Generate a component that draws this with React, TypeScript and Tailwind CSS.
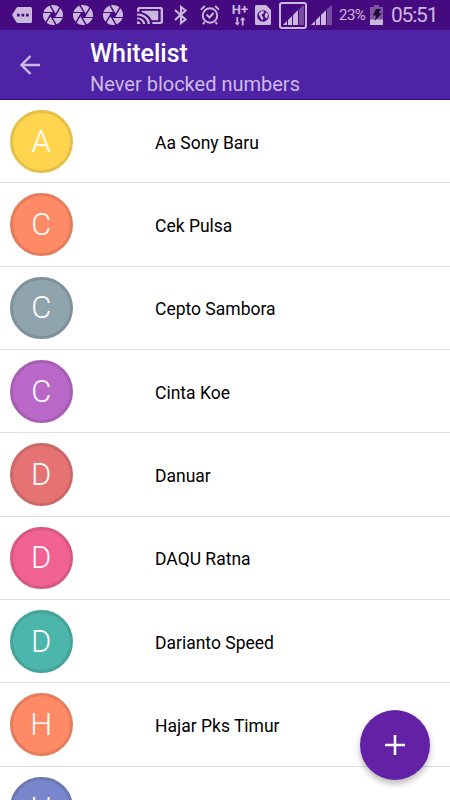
const contacts = [
  { initial: 'A', name: 'Aa Sony Baru', bg: 'bg-[#ffd54f]', ring: 'border-[#e5bf47]' },
  { initial: 'C', name: 'Cek Pulsa', bg: 'bg-[#ff8a65]', ring: 'border-[#e57c5b]' },
  { initial: 'C', name: 'Cepto Sambora', bg: 'bg-[#90a4ae]', ring: 'border-[#7e929c]' },
  { initial: 'C', name: 'Cinta Koe', bg: 'bg-[#ba68c8]', ring: 'border-[#a75db4]' },
  { initial: 'D', name: 'Danuar', bg: 'bg-[#e57373]', ring: 'border-[#ce6767]' },
  { initial: 'D', name: 'DAQU Ratna', bg: 'bg-[#f06292]', ring: 'border-[#d85883]' },
  { initial: 'D', name: 'Darianto Speed', bg: 'bg-[#4db6ac]', ring: 'border-[#45a39a]' },
  { initial: 'H', name: 'Hajar Pks Timur', bg: 'bg-[#ff8a65]', ring: 'border-[#e57c5b]' },
  { initial: 'H', name: '', bg: 'bg-[#7986cb]', ring: 'border-[#6c78b6]' },
];

function Shutter({ className }: { className: string }) {
  return (
    <svg viewBox="2 2 20 20" fill="currentColor" className={`h-5 w-5 shrink-0 -scale-x-100 ${className}`}>
      <path d="M9.4 10.5l4.77-8.26C13.47 2.09 12.75 2 12 2c-2.4 0-4.6.85-6.32 2.25l3.66 6.35.06-.1zM21.54 9c-.92-2.92-3.15-5.26-6-6.34L11.88 9h9.66zm.26 1h-7.49l.29.5 4.76 8.25C21 16.97 22 14.61 22 12c0-.69-.07-1.35-.2-2zM8.54 12l-3.9-6.75C3.01 7.03 2 9.39 2 12c0 .69.07 1.35.2 2h7.49l-1.15-2zm-6.08 3c.92 2.92 3.15 5.26 6 6.34L12.12 15H2.46zm11.27 0l-3.9 6.76c.7.15 1.42.24 2.17.24 2.4 0 4.6-.85 6.32-2.25l-3.66-6.35-.93 1.6z" />
    </svg>
  );
}

function Signal() {
  return (
    <svg viewBox="0 0 21 20" fill="currentColor" className="h-5 w-[21px] shrink-0">
      <path d="M0 20l4-4v4zM5 20v-5l4-4v9zM10 20V10l5-5v15z" />
      <path d="M16 20V4l5-4v20z" opacity=".38" />
    </svg>
  );
}

function StatusBar() {
  return (
    <div className="flex h-[30px] shrink-0 items-center overflow-hidden bg-[#460a80] text-[#cbb8dd]">
      <svg viewBox="0 0 20 16" className="ml-3 h-4 w-5 shrink-0" fill="currentColor">
        <path d="M6 0h12.500Q20 0 20 1.500v13Q20 16 18.500 16H6Q5 16 4.300 15L0 8l4.300-7Q5 0 6 0z" />
        <path d="M5 6.700h2.700v2.700H5zM9.500 6.700h2.700v2.700H9.500zM14 6.700h2.700v2.700H14z" fill="#460a80" />
      </svg>
      <Shutter className="ml-[11px]" />
      <Shutter className="ml-[10px]" />
      <Shutter className="ml-[10px]" />
      <svg viewBox="1 3 22 18" preserveAspectRatio="none" fill="currentColor" className="ml-[14px] mt-[1px] h-[17px] w-[26px] shrink-0">
        <path d="M1 18v3h3c0-1.66-1.34-3-3-3zm0-4v2c2.76 0 5 2.24 5 5h2c0-3.87-3.13-7-7-7zm18-7H5v1.63c3.96 1.28 7.09 4.41 8.37 8.37H19V7zM1 10v2c4.97 0 9 4.03 9 9h2c0-6.08-4.93-11-11-11zm20-7H3c-1.1 0-2 .9-2 2v3h2V5h18v14h-7v2h7c1.1 0 2-.9 2-2V5c0-1.1-.9-2-2-2z" />
      </svg>
      <svg viewBox="0 0 14 20" fill="none" stroke="currentColor" strokeWidth="2.100" className="ml-[11px] h-5 w-[14px] shrink-0">
        <path d="M1 5l10.500 9.500L7 18V2l4.500 3.500L1 15" />
      </svg>
      <svg viewBox="0 0 20 20" fill="none" stroke="currentColor" strokeWidth="1.900" className="ml-[12px] h-5 w-5 shrink-0">
        <circle cx="10" cy="10.500" r="7.200" />
        <path d="M6.500 9.500l3 3L13.500 8M1 4.600L4.800 1M19 4.600L15.200 1M4.500 17l-1.500 2.200M15.500 17l1.500 2.200" />
      </svg>
      <div className="ml-[11px] flex h-[23px] w-[18px] shrink-0 flex-col items-center font-bold">
        <span className="h-[12px] text-[13px] leading-[12px]">H+</span>
        <svg viewBox="0 0 12 10" fill="currentColor" className="mt-[1px] h-[9px] w-3">
          <path d="M2 0h2v6h2l-3 3.500L0 6h2zM8 9.500h2v-6h2L9 0 6 3.500h2z" />
        </svg>
      </div>
      <svg viewBox="0 0 16 20" className="ml-[6px] h-5 w-4 shrink-0">
        <path d="M1.500 0H11l5 5v13.500q0 1.500-1.500 1.500h-13Q0 20 0 18.500v-17Q0 0 1.500 0z" fill="currentColor" />
        <circle cx="8" cy="11" r="5.800" fill="#460a80" />
        <path d="M3.500 9l3-3.300 2.500.7-.5 2-2 1L7 11l1.500 1.500-1 3L6 14l-1-2zM11 7l2 2-.5 3.500-1.500 1-1.500-2.500z" fill="currentColor" />
      </svg>
      <div className="ml-[8px] flex h-[27px] w-[28px] shrink-0 items-center justify-center rounded-[3px] border-2 border-[#cbb8dd]">
        <Signal />
      </div>
      <div className="ml-[4px] flex"><Signal /></div>
      <span className="ml-[7px] w-[27px] shrink-0 text-[15px] leading-5 tracking-[-0.5px]">23%</span>
      <svg viewBox="0 0 13 20" className="ml-[4px] h-5 w-[13px] shrink-0">
        <path d="M4 0h5v2h4v13H0V2h4z" fill="#7e569f" />
        <path d="M0 14.500h13V20H0z" fill="currentColor" />
        <path d="M6 4h5L8.500 8.300H12L4.500 16l2-5.500H3z" fill="#1c0735" />
      </svg>
      <span className="ml-[8px] shrink-0 text-[21px] leading-[28px] tracking-[-1.2px]">05:51</span>
    </div>
  );
}

export default function App() {
  return (
    <div className="relative flex h-[800px] w-[450px] flex-col overflow-hidden bg-white font-[Roboto,sans-serif]">
      <StatusBar />
      <header className="flex h-[70px] shrink-0 border-b border-[#32108c] bg-[#4f23a5]">
        <svg viewBox="0 0 20 20" fill="none" stroke="#cbbbe5" strokeWidth="2.400" className="ml-5 mt-[25px] h-5 w-5 shrink-0">
          <path d="M20 10H2M10.500 1L1.500 10l9 9" />
        </svg>
        <div className="ml-[50px] flex flex-col">
          <h1 className="mt-[8px] h-8 text-[25px] font-medium leading-8 text-white">Whitelist</h1>
          <p className="mt-[2px] h-6 text-[20px] leading-6 text-[#cbbbe5]">Never blocked numbers</p>
        </div>
      </header>
      <ul className="flex shrink-0 flex-col">
        {contacts.map((c, i) => (
          <li key={i} className="flex h-[83.35px] shrink-0 border-b border-[#dedede] pl-[10px] pt-[10px]">
            <div className={`flex h-[62.500px] w-[62.500px] items-center justify-center rounded-full border-[3px] text-[31px] font-light leading-none text-white ${c.bg} ${c.ring}`}>
              {c.initial}
            </div>
            <span className="ml-[82.500px] mt-[20.500px] h-6 text-[17.500px] leading-6 text-black">{c.name}</span>
          </li>
        ))}
      </ul>
      <button aria-label="Add number" className="absolute left-[360px] top-[710px] flex h-[70px] w-[70px] items-center justify-center rounded-full bg-[#6322a5] shadow-[0_4px_6px_rgba(0,0,0,0.27)]">
        <svg viewBox="0 0 20 20" className="h-5 w-5" stroke="#fff" strokeWidth="2.600">
          <path d="M10 0v20M0 10h20" />
        </svg>
      </button>
    </div>
  );
}
